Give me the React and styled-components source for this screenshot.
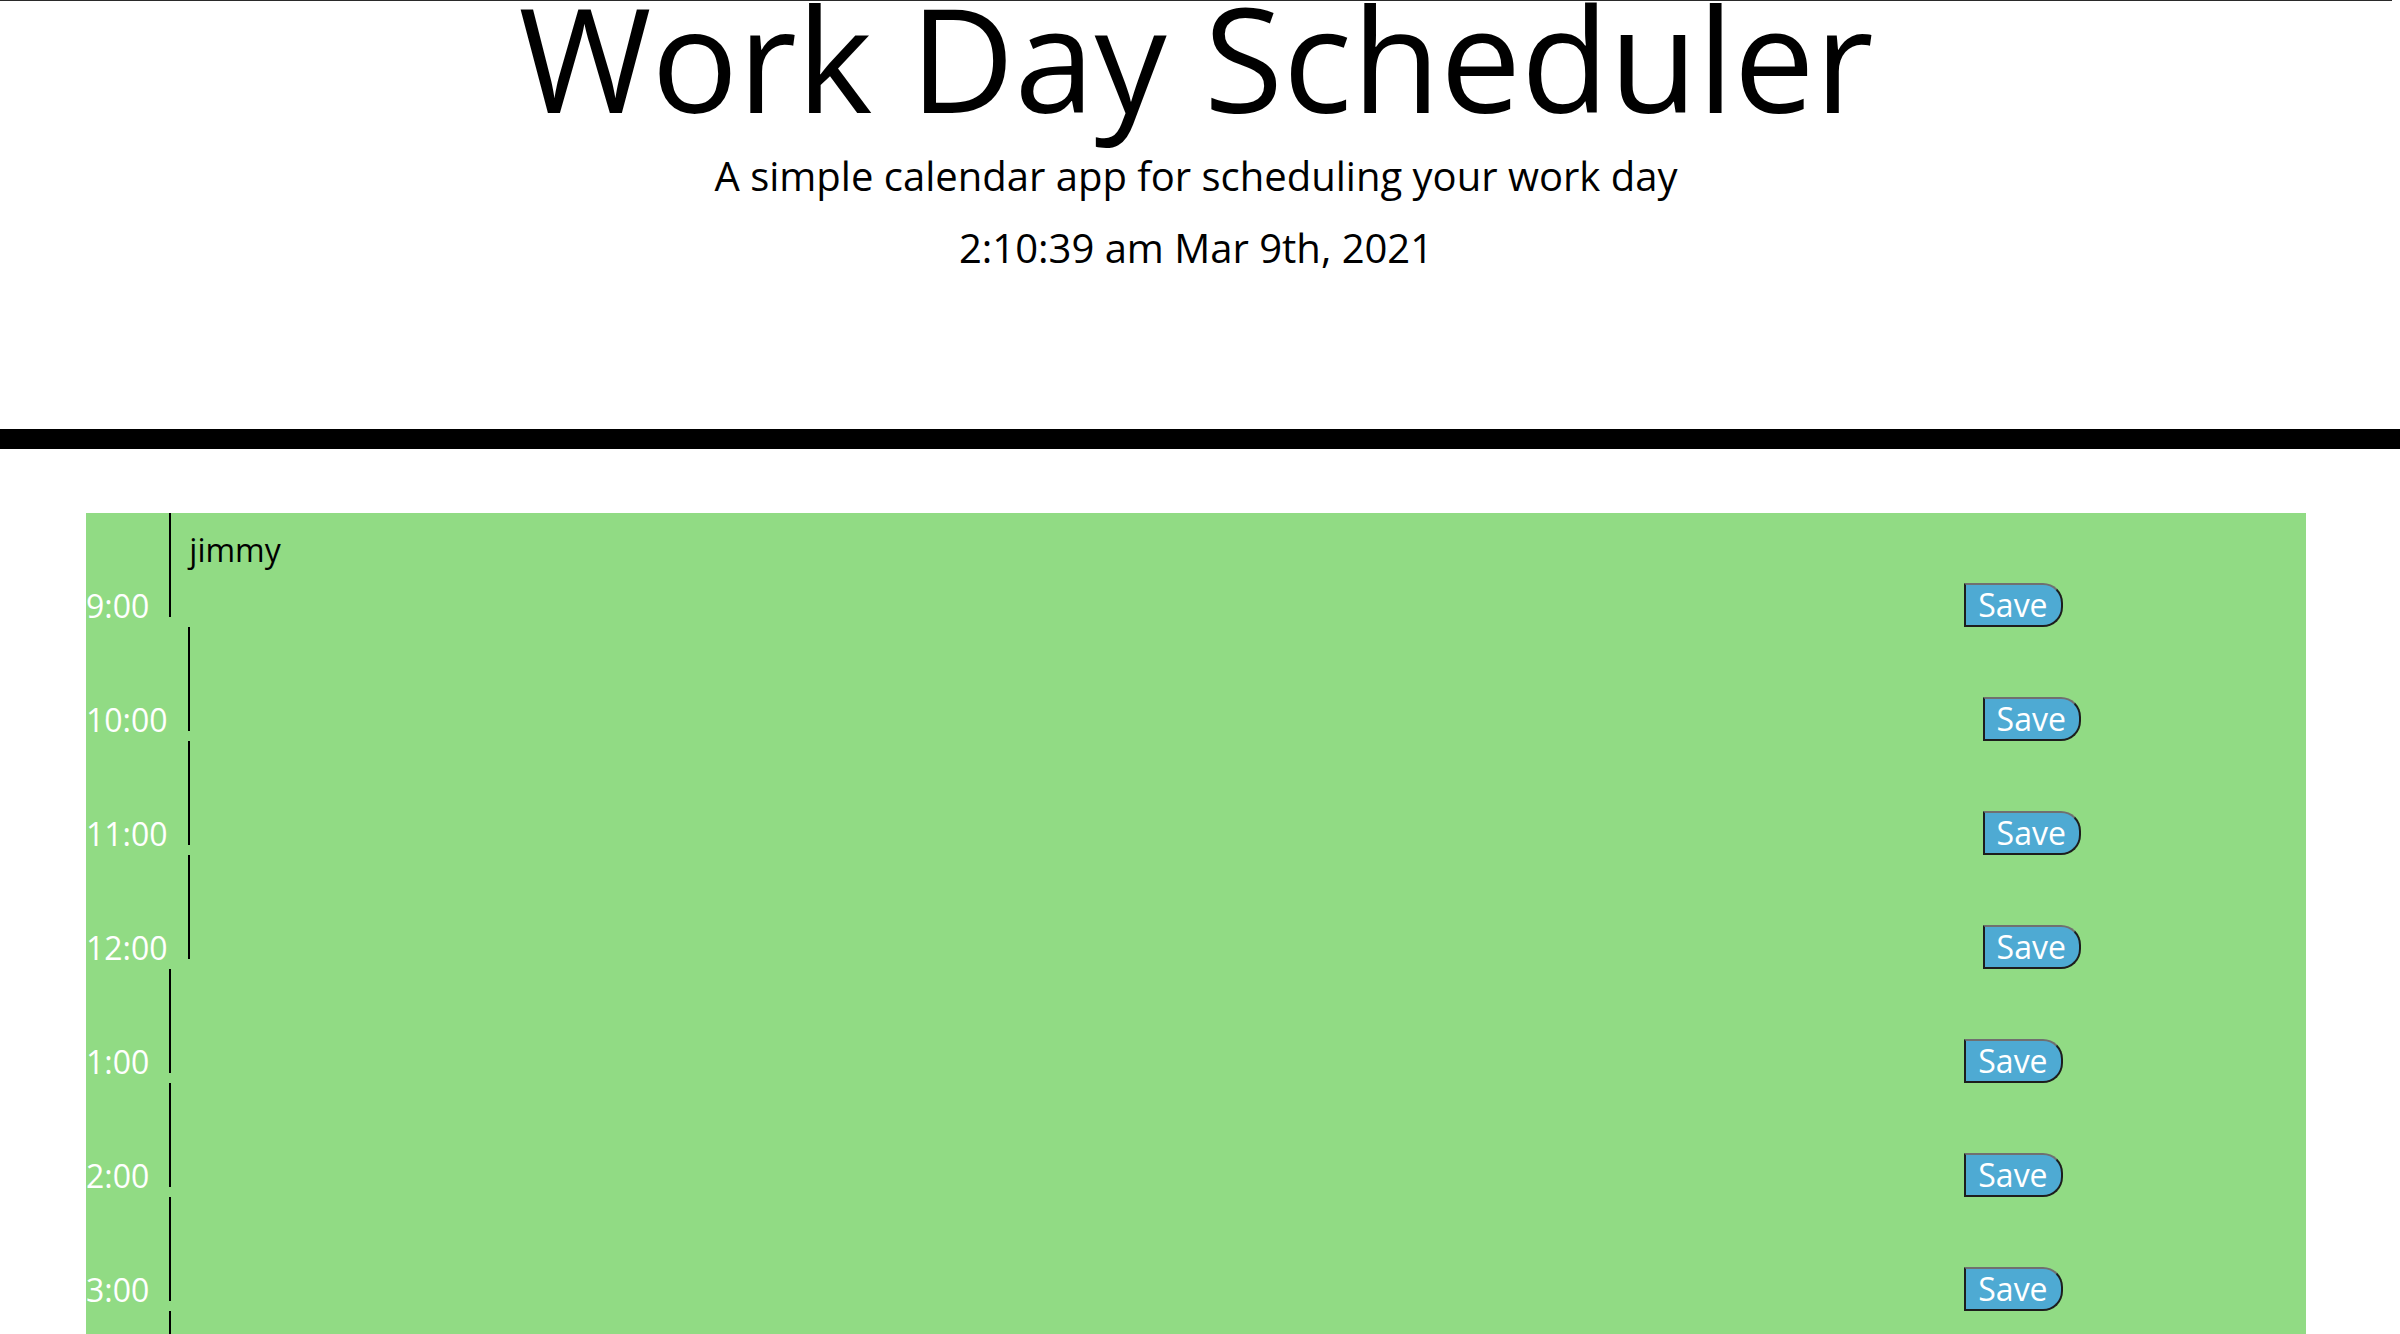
import React from "react";
import styled, { createGlobalStyle } from "styled-components";

const GlobalStyle = createGlobalStyle`
  html, body {
    margin: 0;
    padding: 0;
    background: #ffffff;
  }
  body {
    font-family: "Open Sans", "Noto Sans", "Liberation Sans", sans-serif;
    color: #000000;
    line-height: 1;
  }
`;

const Page = styled.div`
  width: 2392px;
  border-top: 1px solid #2a2a2a;
  min-height: 1333px;
`;

const Header = styled.header`
  text-align: center;
  padding-bottom: 161px;
  border-bottom: 20px solid #000000;
  margin-right: -8px;
  padding-right: 8px;
`;

const Title = styled.h1`
  margin: 0 0 43px;
  font-size: 144px;
  font-weight: 400;
  line-height: 112px;
  color: #000000;
`;

const Lead = styled.p`
  margin: 0 0 ${(p) => (p.$last ? "0" : "32px")};
  font-size: 40px;
  font-weight: 400;
  line-height: 40px;
`;

const Schedule = styled.main`
  margin: 64px auto 0;
  width: 2220px;
  background: #91db84;
`;

const Row = styled.div`
  display: flex;
  align-items: flex-end;
  height: 114px;
`;

const Hour = styled.span`
  font-size: 32px;
  line-height: 32px;
  color: #ffffff;
  margin-bottom: 5px;
  white-space: nowrap;
`;

const Description = styled.textarea`
  box-sizing: border-box;
  width: 1795px;
  height: 104px;
  margin: 0 0 10px 20px;
  padding: 21px 18px 18px;
  background: transparent;
  border: none;
  border-left: 2px solid #000000;
  resize: none;
  outline: none;
  font-family: "Open Sans", "Noto Sans", sans-serif;
  font-size: 32px;
  line-height: 32px;
  color: #000000;
  overflow: hidden;
`;

const SaveButton = styled.button`
  box-sizing: border-box;
  height: 44px;
  padding: 2px 13px 2px 12px;
  background: #4eaad3;
  color: #ffffff;
  font-family: "Open Sans", "Noto Sans", sans-serif;
  font-size: 32px;
  line-height: 36px;
  border: 2px solid #1d1d1d;
  border-top-color: #707070;
  border-radius: 0 20px 20px 0;
  cursor: pointer;
`;

const hours = [
  { label: "9:00", text: "jimmy" },
  { label: "10:00", text: "" },
  { label: "11:00", text: "" },
  { label: "12:00", text: "" },
  { label: "1:00", text: "" },
  { label: "2:00", text: "" },
  { label: "3:00", text: "" },
  { label: "4:00", text: "" },
  { label: "5:00", text: "" },
];

export default function App() {
  return (
    <>
      <GlobalStyle />
      <Page>
        <Header>
          <Title>Work Day Scheduler</Title>
          <Lead>A simple calendar app for scheduling your work day</Lead>
          <Lead $last>2:10:39 am Mar 9th, 2021</Lead>
        </Header>
        <Schedule>
          {hours.map((h) => (
            <Row key={h.label}>
              <Hour>{h.label}</Hour>
              <Description defaultValue={h.text} />
              <SaveButton type="button">Save</SaveButton>
            </Row>
          ))}
        </Schedule>
      </Page>
    </>
  );
}
